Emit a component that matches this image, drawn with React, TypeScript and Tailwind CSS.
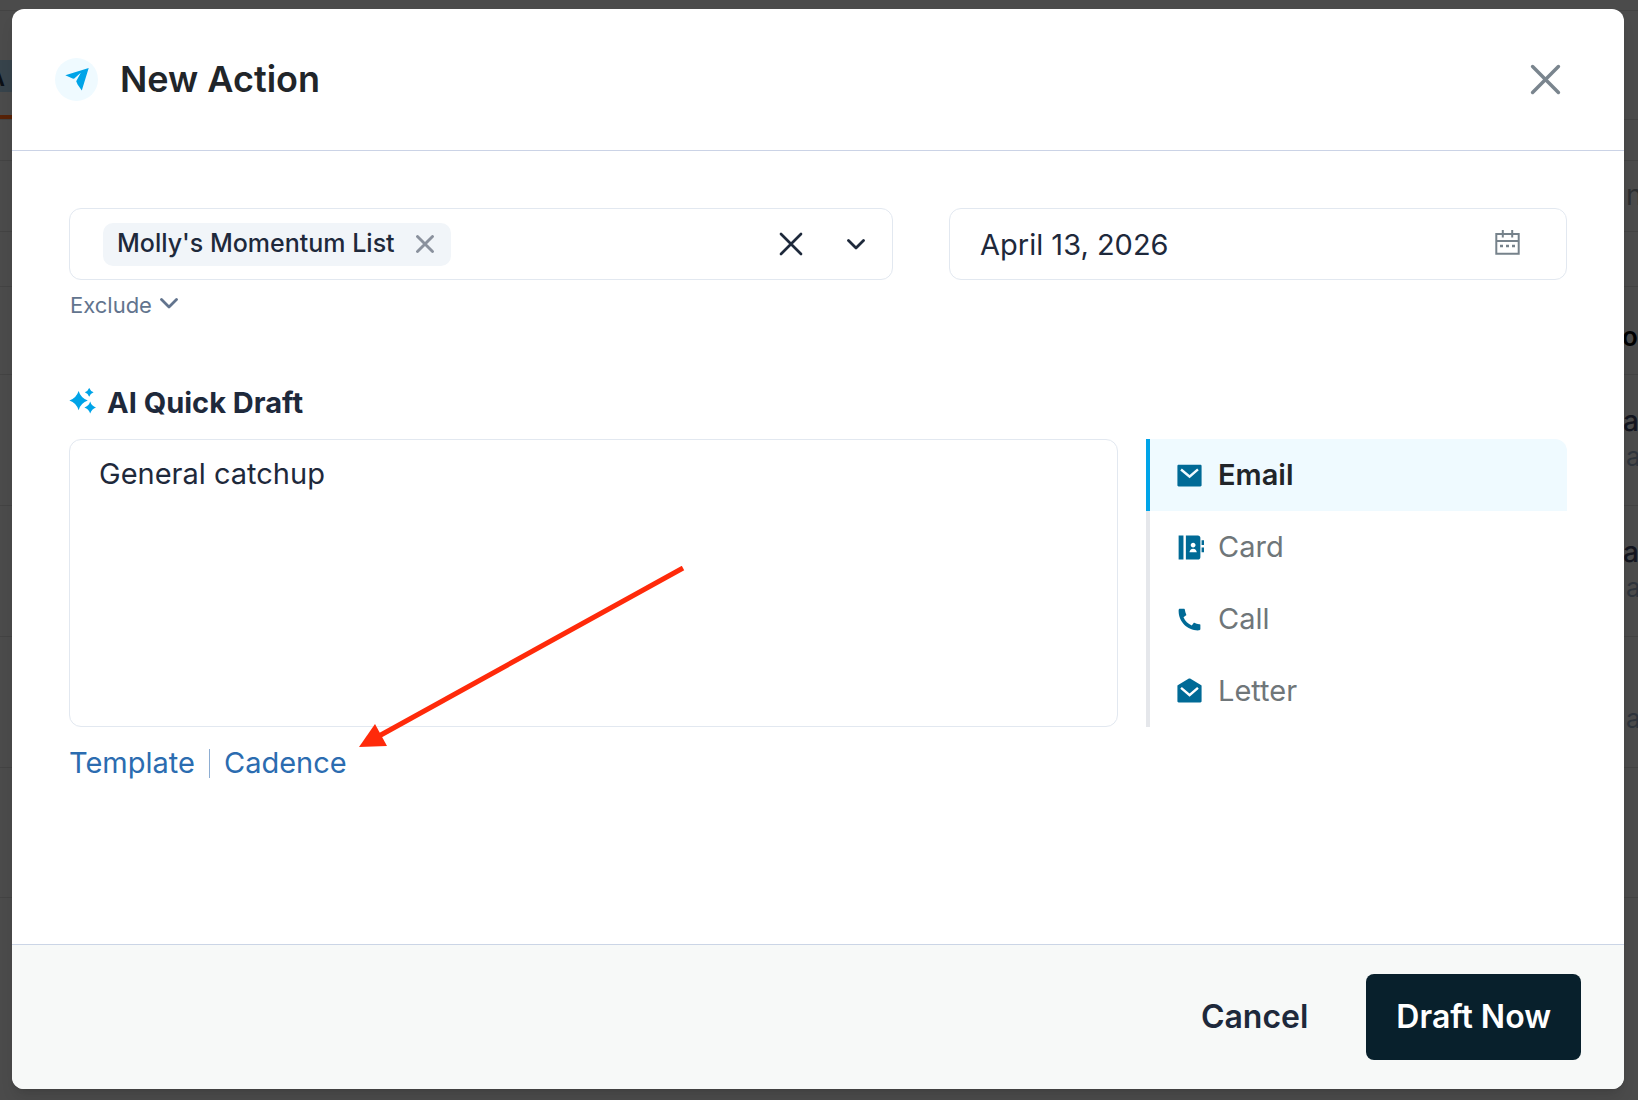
import { useState } from "react";
import clsx from "clsx";
import {
  RiContactsBookFill,
  RiMailFill,
  RiMailOpenFill,
  RiPhoneFill,
} from "react-icons/ri";

const channels = [
  { name: "Email", icon: RiMailFill },
  { name: "Card", icon: RiContactsBookFill },
  { name: "Call", icon: RiPhoneFill },
  { name: "Letter", icon: RiMailOpenFill },
];

const CloseIcon = ({ className, stroke }: { className: string; stroke: number }) => (
  <svg viewBox="0 0 24 24" fill="none" stroke="currentColor" strokeWidth={stroke} strokeLinecap="round" className={className}>
    <path d="M2 2 22 22M22 2 2 22" />
  </svg>
);

const ChevronIcon = ({ className }: { className: string }) => (
  <svg viewBox="0 0 18 11" fill="none" stroke="currentColor" strokeWidth="2.8" strokeLinecap="round" strokeLinejoin="round" className={className}>
    <path d="M1.5 1.5 9 9l7.5-7.5" />
  </svg>
);

const PlaneIcon = () => (
  <svg viewBox="0 0 24 24" fill="#00a4e8" className="size-6">
    <path d="M0.3 8.2 23.7 .9 16.8 23.4 12.6 17.4 11.2 14.2 15.8 5.7 9 11.8 7.6 11.4Z" />
  </svg>
);

const SparkleIcon = () => (
  <svg viewBox="0 0 27 26" fill="#00a4e8" className="mb-1 h-[26px] w-[27px]">
    <path d="M9.6 3.1Q11.8 10.1 18.8 12.6 11.8 15 9.6 22.2 7.4 15 .4 12.6 7.4 10.1 9.6 3.1Z" />
    <path d="M20.2-.2Q21.3 3.1 24.6 4.2 21.3 5.3 20.2 8.7 19.1 5.3 15.8 4.2 19.1 3.1 20.2-.2Z" />
    <path d="M21.2 13.5Q22.6 18.1 27 19.5 22.6 20.9 21.2 25.5 19.8 20.9 15.4 19.5 19.8 18.1 21.2 13.5Z" />
  </svg>
);

const CalendarIcon = () => (
  <svg viewBox="0 0 25 25" fill="none" stroke="currentColor" strokeWidth="2" className="mb-[3px] size-[25px]">
    <path d="M1.3 4H23.7V23.8H1.3ZM1.3 11H23.7M7.8 0V7.5M17.2 0V7.5" />
    <path d="M5 16H8M11 16H14M17 16H20" strokeWidth="2.4" />
  </svg>
);

// The dimmed page that shows round the edges of the dialog
const Backdrop = () => (
  <div aria-hidden="true" className="absolute inset-0 flex flex-col overflow-hidden bg-[#4b4b4b] *:shrink-0 *:border-b *:border-[#434343]">
    <div className="h-[11px]" />
    <div className="flex h-[109px] flex-col justify-between">
      <div className="mt-[49px] flex h-8 w-3 items-center justify-end bg-[#37434b] pr-[7px] text-[28px] font-medium text-[#0b1016]">
        A
      </div>
      <div className="h-1 w-3 bg-[#572207]" />
    </div>
    <div className="h-[41px]" />
    <div className="flex h-[71px] justify-end">
      <span className="w-3 pt-4 text-[28px] leading-9 text-[#2c2e30]">n</span>
    </div>
    <div className="h-[55px]" />
    <div className="flex h-[88px] justify-end">
      <span className="w-4 pt-8 text-[26px] leading-9 font-semibold text-black">o</span>
    </div>
    {[true, true, false].map((named, i) => (
      <div key={i} className="flex h-[131px] flex-col items-end pt-7 leading-9">
        <span className="h-9 w-[15px] text-[28px] font-medium text-[#14161f]">
          {named && "a"}
        </span>
        <span className="w-3 text-[26px] text-[#2e343c]">a</span>
      </div>
    ))}
    <div className="h-[130px]" />
  </div>
);

export default function App() {
  const [channel, setChannel] = useState("Email");
  const [showChip, setShowChip] = useState(true);

  return (
    <main className="relative flex min-h-screen font-['Inter',sans-serif]">
      <Backdrop />

      <div role="dialog" aria-labelledby="title" className="relative mt-[9px] mr-[14px] mb-[11px] ml-3 flex flex-1 flex-col overflow-hidden rounded-xl bg-white shadow-lg">
        <header className="flex h-[142px] items-center border-b border-[#cbd3e6] pr-[63px] pb-px pl-[43px]">
          <div className="flex size-[43px] items-center justify-center rounded-full bg-[#effaff]">
            <PlaneIcon />
          </div>
          <h1 id="title" className="ml-[22px] text-4xl font-semibold text-[#212529]">
            New Action
          </h1>
          <button type="button" aria-label="Close" className="ml-auto text-[#7a858e]">
            <CloseIcon className="size-[31px]" stroke={2.7} />
          </button>
        </header>

        <section className="flex-1 px-[57px] pt-[57px] text-[#1e293b]">
          <div className="grid grid-cols-[4fr_3fr] items-start gap-x-14">
            <div>
              <div className="flex h-[72px] items-center rounded-xl border border-slate-200 pr-[27px] pl-[33px]">
                {showChip && (
                  <span className="flex h-[43px] items-center rounded-[10px] bg-slate-100 pr-[17px] pl-[14px] text-[25px] font-medium">
                    Molly&apos;s Momentum List
                    <button type="button" aria-label="Remove list" onClick={() => setShowChip(false)} className="ml-[21px] text-[#8a919d]">
                      <CloseIcon className="size-[18px]" stroke={3.8} />
                    </button>
                  </span>
                )}
                <button type="button" aria-label="Clear all" onClick={() => setShowChip(false)} className="ml-auto">
                  <CloseIcon className="size-6" stroke={2.7} />
                </button>
                <button type="button" aria-label="Open lists" className="ml-11">
                  <ChevronIcon className="h-[11px] w-[18px]" />
                </button>
              </div>
              <button type="button" className="mt-[7px] flex items-center gap-2 pl-px text-[22px] leading-9 text-slate-500">
                Exclude
                <ChevronIcon className="mb-1 h-[11px] w-[18px]" />
              </button>
            </div>

            <div className="flex h-[72px] items-center rounded-xl border border-slate-200 pr-[46px] pl-[30px]">
              <input
                type="text"
                aria-label="Date"
                defaultValue="April 13, 2026"
                className="min-w-0 flex-1 bg-transparent pt-0.5 text-[29px] leading-10 outline-none"
              />
              <button type="button" aria-label="Pick a date" className="text-[#76828b]">
                <CalendarIcon />
              </button>
            </div>
          </div>

          <label htmlFor="draft" className="mt-[60px] flex h-10 items-center gap-[11px] text-[29px] font-bold">
            <SparkleIcon />
            AI Quick Draft
          </label>

          <div className="mt-4 grid grid-cols-[1fr_421px] gap-x-7">
            <textarea
              id="draft"
              defaultValue="General catchup"
              className="h-72 resize-none rounded-xl border border-slate-200 px-[29px] py-[14px] text-[29px] leading-10 outline-none"
            />
            <div className="flex flex-col">
              {channels.map(({ name, icon: Icon }) => (
                <button
                  key={name}
                  type="button"
                  aria-pressed={channel === name}
                  onClick={() => setChannel(name)}
                  className={clsx(
                    "flex h-[72px] items-center gap-[14px] border-l-4 pl-[25px] text-[29px]",
                    channel === name
                      ? "rounded-tr-xl border-[#00a4e8] bg-[#effaff] font-semibold text-[#212529]"
                      : "border-[#e5e7eb] text-[#6f7679]"
                  )}
                >
                  <Icon className="size-[29px] text-[#006a96]" />
                  {name}
                </button>
              ))}
            </div>
          </div>

          <nav className="mt-4 flex items-center gap-[14px] text-[29px] leading-10 text-[#2b6cb0]">
            <a href="#template">Template</a>
            <span className="h-[29px] w-px bg-[#8dadd2]" />
            <a href="#cadence">Cadence</a>
          </nav>
        </section>

        <footer className="flex h-[145px] items-center justify-end gap-7 border-t border-[#cbd5e6] bg-[#f7f9f8] pr-[43px] text-[32px] font-semibold">
          <button type="button" className="h-[86px] px-[30px] text-[#1e293b]">
            Cancel
          </button>
          <button type="button" className="h-[86px] rounded-lg bg-[#08202c] px-[30px] text-white">
            Draft Now
          </button>
        </footer>

        {/* Pointer to the Cadence link */}
        <svg viewBox="0 0 326 182" className="pointer-events-none absolute top-[557px] left-[347px] h-[182px] w-[326px]">
          <path d="M324 2 20 170" stroke="#ff2a0a" strokeWidth="5" />
          <path d="M0 181 16 158 28 180Z" fill="#ff2a0a" />
        </svg>
      </div>
    </main>
  );
}
